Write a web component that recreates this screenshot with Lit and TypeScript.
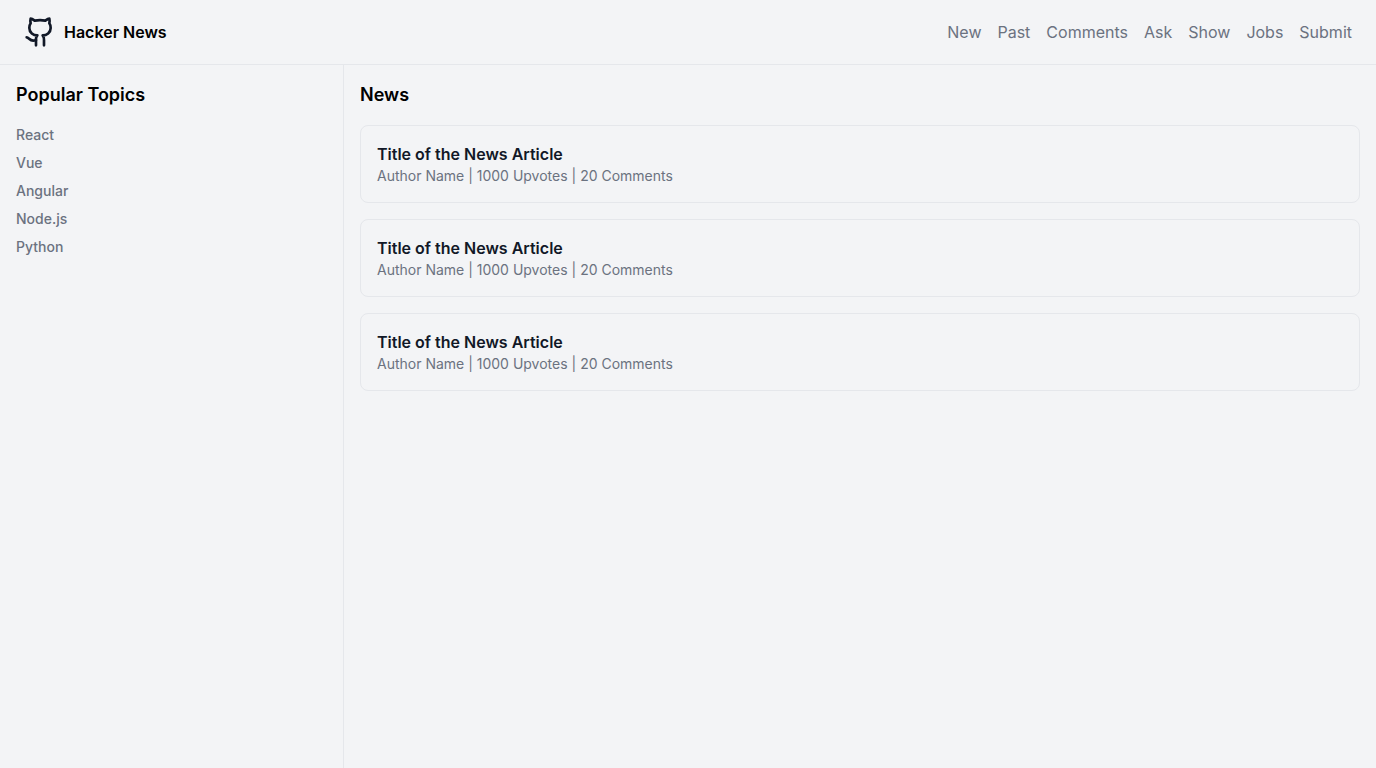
import { LitElement, html, css } from "lit";
import { customElement } from "lit/decorators.js";

@customElement("app-root")
export class AppRoot extends LitElement {
  static styles = css`
    :host {
      display: flex;
      flex-direction: column;
      min-height: 100vh;
      background: #f3f4f6;
      color: #000000;
      font-family: Inter, sans-serif;
      font-size: 16px;
      line-height: 24px;
    }
    * { box-sizing: border-box; }
    h1, h2, h3, p, ul { margin: 0; padding: 0; }
    ul { list-style: none; }
    a { color: inherit; text-decoration: none; }
    .header {
      display: flex;
      align-items: center;
      justify-content: space-between;
      padding: 16px 24px;
      border-bottom: 1px solid #e5e7eb;
    }
    .brand {
      display: flex;
      align-items: center;
      gap: 8px;
    }
    .logo {
      display: block;
      width: 32px;
      height: 32px;
      color: #111827;
    }
    .name { font-size: 16px; font-weight: 600; }
    .nav { display: flex; gap: 16px; color: #6b7280; }
    .body {
      flex: 1;
      display: grid;
      grid-template-columns: 1fr 3fr;
    }
    .topics { padding: 16px; border-right: 1px solid #e5e7eb; }
    .news { padding: 16px; }
    .heading {
      font-size: 18px;
      line-height: 28px;
      font-weight: 600;
      margin-bottom: 16px;
    }
    .list {
      display: grid;
      gap: 8px;
      font-size: 14px;
      line-height: 20px;
      font-weight: 500;
      color: #6b7280;
    }
    .cards { display: grid; gap: 16px; }
    .card {
      padding: 16px;
      border: 1px solid #e5e7eb;
      border-radius: 8px;
    }
    .title { font-size: 16px; font-weight: 600; color: #111827; }
    .meta { font-size: 14px; line-height: 20px; color: #6b7280; }
  `;

  private links = ["New", "Past", "Comments", "Ask", "Show", "Jobs", "Submit"];
  private topics = ["React", "Vue", "Angular", "Node.js", "Python"];
  private articles = Array.from({ length: 3 }, () => ({
    title: "Title of the News Article",
    author: "Author Name",
    upvotes: 1000,
    comments: 20,
  }));

  render() {
    return html`
      <header class="header">
        <a class="brand" href="#">
          <svg class="logo" viewBox="0 0 24 24" fill="none" stroke="currentColor" stroke-width="2"
            stroke-linecap="round" stroke-linejoin="round" aria-hidden="true">
            <path d="M15 22v-4a4.800 4.800 0 0 0-1-3.500c3 0 6-2 6-5.500.080-1.250-.270-2.480-1-3.500.280-1.150.280-2.350 0-3.500 0 0-1 0-3 1.500-2.640-.500-5.360-.500-8 0C6 2 5 2 5 2c-.300 1.150-.300 2.350 0 3.500A5.403 5.403 0 0 0 4 9c0 3.500 3 5.500 6 5.500-.390.490-.680 1.050-.850 1.650-.170.600-.220 1.230-.150 1.850v4" />
            <path d="M9 18c-4.510 2-5-2-7-2" />
          </svg>
          <h1 class="name">Hacker News</h1>
        </a>
        <nav class="nav">${this.links.map((l) => html`<a href="#">${l}</a>`)}</nav>
      </header>
      <div class="body">
        <aside class="topics">
          <h2 class="heading">Popular Topics</h2>
          <ul class="list">${this.topics.map((t) => html`<li><a href="#">${t}</a></li>`)}</ul>
        </aside>
        <main class="news">
          <h2 class="heading">News</h2>
          <div class="cards">
            ${this.articles.map(
              (a) => html`<article class="card">
                <h3 class="title"><a href="#">${a.title}</a></h3>
                <p class="meta">${a.author} | ${a.upvotes} Upvotes | ${a.comments} Comments</p>
              </article>`
            )}
          </div>
        </main>
      </div>
    `;
  }
}
